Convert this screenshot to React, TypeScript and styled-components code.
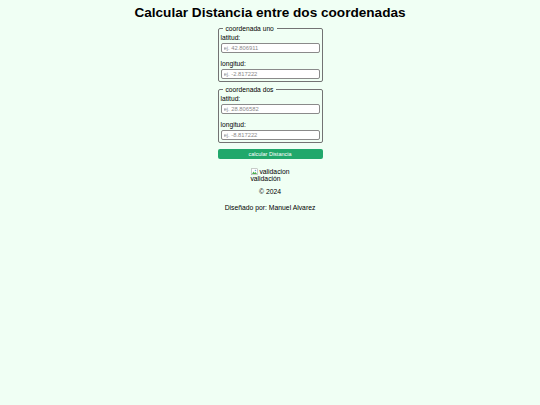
import { FC } from 'react';
import styled, { createGlobalStyle } from 'styled-components';

const GlobalStyle = createGlobalStyle`
    html, body {
        margin: 0;
        padding: 0;
        background-color: #f0fff4;
        font-family: 'Liberation Sans', Arial, sans-serif;
        color: #000;
    }
`;

const Page = styled.main`
    display: flex;
    flex-direction: column;
    align-items: center;
    min-height: 405px;
`;

const Title = styled.h1`
    margin: 3px 0 2px;
    font-size: 13.6px;
    font-weight: 700;
    line-height: 19px;
`;

const Form = styled.form`
    display: flex;
    flex-direction: column;
    width: 105px;
    row-gap: 3px;
`;

const Fieldset = styled.fieldset`
    box-sizing: border-box;
    margin: 0;
    padding: 0 2px 2px;
    border: 1px solid #737373;
    border-radius: 2px;
`;

const Legend = styled.legend`
    margin-left: 2px;
    padding: 0 3px;
    font-size: 6.7px;
    line-height: 9px;
`;

const Label = styled.label<{ $first?: boolean }>`
    display: block;
    font-size: 6.7px;
    line-height: 9px;
    margin-top: ${(props) => (props.$first ? '0' : '6px')};
`;

const Input = styled.input`
    box-sizing: border-box;
    display: block;
    width: 100%;
    height: 10px;
    margin: 1px 0 0;
    padding: 0 2px;
    border: 1px solid #8a8a8a;
    border-radius: 2px;
    background: #fff;
    font-family: 'Liberation Sans', Arial, sans-serif;
    font-size: 5.8px;

    &::placeholder {
        color: #8a8a8a;
    }
`;

const SubmitButton = styled.button`
    box-sizing: border-box;
    height: 10px;
    margin-top: 3px;
    padding: 0;
    border: none;
    border-radius: 2px;
    background-color: #21a86b;
    color: #fff;
    font-family: 'Liberation Sans', Arial, sans-serif;
    font-size: 5.5px;
`;

const Result = styled.div`
    display: flex;
    flex-direction: column;
    align-items: flex-start;
    margin-top: 9px;
    font-size: 6.8px;
    line-height: 7px;
`;

const BrokenImage = styled.span`
    display: flex;
    align-items: center;
    height: 7px;
`;

const Text = styled.p<{ $top: number }>`
    margin: ${(props) => props.$top}px 0 0;
    font-size: 6.8px;
    line-height: 9px;
`;

const BrokenIcon: FC = () => (
    <svg width="9" height="8" viewBox="0 0 16 16">
        <rect x="1.5" y="1.5" width="12" height="12" fill="#fff" stroke="#9a9a9a" />
        <path d="M3 12 L6 7 L8 10 L10 8 L13 12 Z" fill="#4caf50" />
        <circle cx="10" cy="5" r="1.5" fill="#6aa9e8" />
    </svg>
);

const coordinates = [
    { legend: 'coordenada uno', lat: 'ej. 42.806911', lon: 'ej. -2.817222' },
    { legend: 'coordenada dos', lat: 'ej. 28.806582', lon: 'ej. -8.817222' },
];

const App: FC = () => (
    <>
        <GlobalStyle />
        <Page>
            <Title>Calcular Distancia entre dos coordenadas</Title>
            <Form onSubmit={(e) => e.preventDefault()}>
                {coordinates.map((c) => (
                    <Fieldset key={c.legend}>
                        <Legend>{c.legend}</Legend>
                        <Label $first>
                            latitud:
                            <Input type="text" placeholder={c.lat} />
                        </Label>
                        <Label>
                            longitud:
                            <Input type="text" placeholder={c.lon} />
                        </Label>
                    </Fieldset>
                ))}
                <SubmitButton type="submit">calcular Distancia</SubmitButton>
            </Form>
            <Result>
                <BrokenImage>
                    <BrokenIcon />
                    validacion
                </BrokenImage>
                <span>validación</span>
            </Result>
            <Text $top={5}>© 2024</Text>
            <Text $top={7}>Diseñado por: Manuel Alvarez</Text>
        </Page>
    </>
);

export default App;
